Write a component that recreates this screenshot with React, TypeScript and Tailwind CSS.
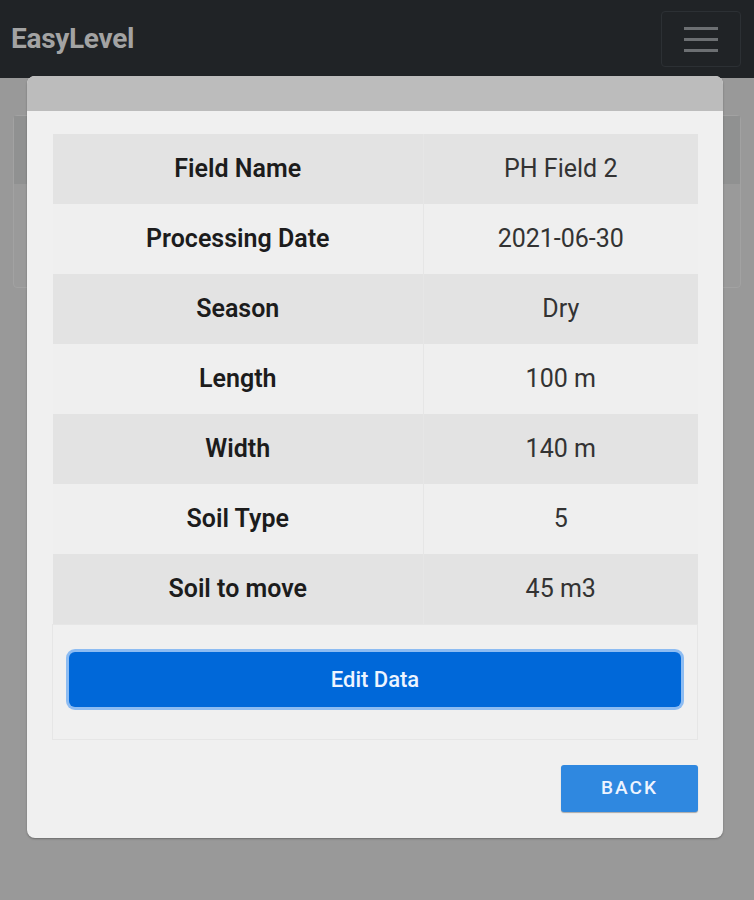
import React from "react";

const rows: [string, string][] = [
  ["Field Name", "PH Field 2"],
  ["Processing Date", "2021-06-30"],
  ["Season", "Dry"],
  ["Length", "100 m"],
  ["Width", "140 m"],
  ["Soil Type", "5"],
  ["Soil to move", "45 m3"],
];

function Navbar() {
  return (
    <nav className="flex h-[78px] items-center justify-between bg-[#202326] pl-[11px] pr-[13px]">
      <span className="text-[28px] font-bold tracking-[-0.3px] text-[#a3a3a3]">
        EasyLevel
      </span>
      <button className="flex h-[56px] w-[80px] flex-col items-center justify-center gap-[8px] rounded-[4px] border border-[#2c3034]">
        <span className="h-[3px] w-[34px] bg-[#6c6f72]" />
        <span className="h-[3px] w-[34px] bg-[#6c6f72]" />
        <span className="h-[3px] w-[34px] bg-[#6c6f72]" />
      </button>
    </nav>
  );
}

function FieldModal() {
  return (
    <div className="absolute left-[27px] top-[-2px] w-[696px] overflow-hidden rounded-[8px] bg-[#f0f0f0] shadow-[0_1px_2px_rgba(0,0,0,0.3)]">
      <div className="h-[35px] bg-[#bcbcbc]" />
      <div className="px-[25px] pt-[23px]">
        <table className="w-full border-collapse text-[25px]">
          <tbody>
            {rows.map(([label, value], i) => (
              <tr
                key={label}
                className={i % 2 === 0 ? "h-[70px] bg-[#e3e3e3]" : "h-[70px] bg-[#efefef]"}
              >
                <td className="w-[371px] border-r border-[#e6e6e6] pb-[1px] text-center font-semibold text-[#1c1c1c]">
                  {label}
                </td>
                <td className="pb-[1px] text-center text-[#333]">{value}</td>
              </tr>
            ))}
            <tr>
              <td colSpan={2} className="border border-[#e6e6e6] px-[16px] pb-[32px] pt-[27px]">
                <button className="h-[55px] w-full rounded-[6px] bg-[#0068d9] text-[22px] font-medium text-[#eef4ff] ring-[3px] ring-[#8dbcf2]">
                  Edit Data
                </button>
              </td>
            </tr>
          </tbody>
        </table>
        <div className="flex justify-end pb-[26px] pt-[25px]">
          <button className="h-[47px] w-[137px] rounded-[3px] bg-[#2f88e0] text-[19px] font-medium tracking-[2px] text-[#eef4ff] shadow-[0_1px_1px_rgba(0,0,0,0.3)]">
            BACK
          </button>
        </div>
      </div>
    </div>
  );
}

export default function App() {
  return (
    <div className="h-[900px] overflow-hidden bg-[#999999] font-['Roboto',sans-serif]">
      <Navbar />
      <main className="relative px-[13px] pt-[37px]">
        <div className="h-[173px] rounded-[4px] border border-[#a2a2a2] bg-[#9a9a9a]">
          <div className="h-[68px] bg-[#909191]" />
        </div>
        <FieldModal />
      </main>
    </div>
  );
}
